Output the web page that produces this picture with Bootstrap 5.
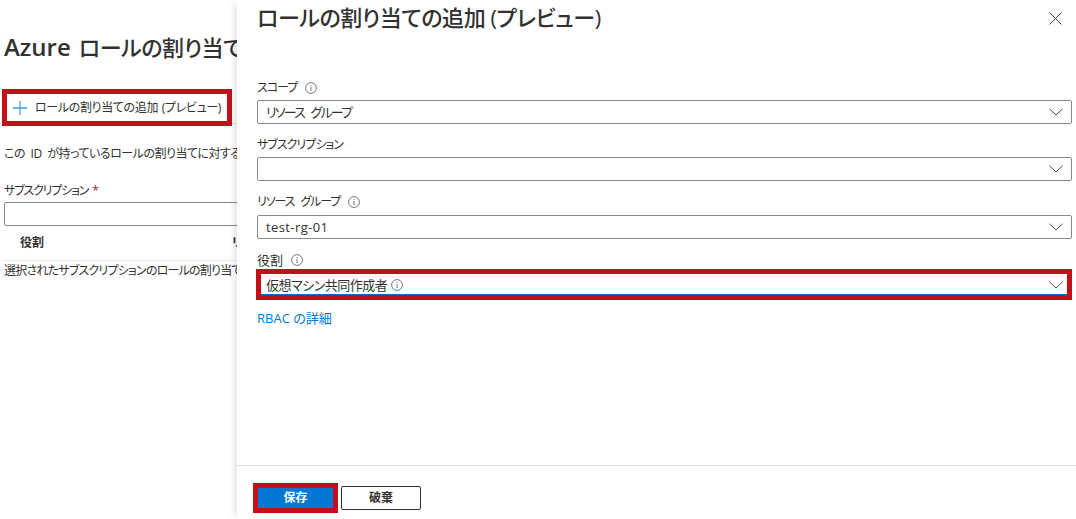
<!DOCTYPE html>
<html lang="ja"><head><meta charset="utf-8">
<link href="https://cdn.jsdelivr.net/npm/bootstrap@5.3.0/dist/css/bootstrap.min.css" rel="stylesheet">
<style>
html,body{height:519px;overflow:hidden;background:#fff}
body{font-family:"Open Sans","Noto Sans CJK JP",sans-serif;font-size:12px;color:#323130;font-feature-settings:"palt";line-height:16px}
.blade{width:237px;height:519px;overflow:hidden;flex:none}
.blade-in{width:400px;padding-left:4px}
.bl-title{font-size:22px;font-weight:500;line-height:32px;margin:31px 0 0;white-space:nowrap;letter-spacing:-.4px}
.az{font-size:24px;font-weight:600;margin-right:8px;letter-spacing:0}
.cmd-wrap{height:37px;width:230px;margin:26px 0 0 -2px;border:5px solid #c30f1c;padding-left:6px;gap:8px;color:#323130;white-space:nowrap;letter-spacing:-.35px;word-spacing:1px}
.cmd-rule{border-top:1px solid #e1dfdd;margin:-3px 0 0 228px;width:20px;height:1px}
.desc{margin:22px 0 0;white-space:nowrap;letter-spacing:-.5px;word-spacing:3px}
.lab-a{margin:21px 0 -1px;letter-spacing:-1.2px}
.req{color:#a4262c;margin-left:4px}
.inp-a{height:24px;border:1px solid #8a8886;border-radius:2px;margin-top:4px}
.thead-a{height:35px;border-bottom:1px solid #edebe9;font-weight:700;width:400px;padding-left:16px;padding-top:9px}
.thead-a span+span{margin-left:188px}
.empty{margin-top:2px;white-space:nowrap;letter-spacing:-.8px}
.pane{flex:1 1 auto;height:519px;min-width:0;box-shadow:-6px 0 8px -4px rgba(0,0,0,.13);background:#fff}
.pane-head{height:40px;padding:0 14px 0 20px}
.pane-title{font-size:22px;font-weight:500;line-height:34px;margin:0;white-space:nowrap;letter-spacing:-.4px}
.pane-body{padding:39px 4px 0 20px}
.fld-lab{height:16px;line-height:16px;gap:8px;margin:1px 0 4px;white-space:nowrap}
.fld-third .fld-lab{margin-bottom:5px}
.tight{letter-spacing:-1px}
.tight-sp{letter-spacing:-1.1px;word-spacing:4px}
.wide13{font-size:13px}
.fld{margin-bottom:13px}
.sel-a{height:24px;border:1px solid #8a8886;border-radius:2px;padding:0 9px 0 8px;font-size:13px;gap:4px}
.sel-a .chev{margin-left:auto;margin-right:-1px}
.sel-tight{letter-spacing:-1.8px;word-spacing:5px}
.sel-latin{letter-spacing:.4px}
.sel-hot{outline:5px solid #c30f1c;outline-offset:-4px;border:0;border-radius:0;height:29px;margin:-2px 1px 0 0;padding:0 8px 0 9px;box-shadow:inset 0 -5px 0 #0f6cbd;letter-spacing:-.5px}
.sel-hot .chev{margin-right:0}
.fld-hot{margin-bottom:11px}
.rbac{display:block;color:#0078d4;text-decoration:none;font-size:13px}
.pane-foot{margin-top:auto;height:54px;border-top:1px solid #e1dfdd;padding:20px 0 0 21px;gap:8px}
.btn-save{width:75px;height:20px;margin-top:2px;background:#0078d4;color:#fff;font-weight:700;border:0;border-radius:0;outline:5px solid #c30f1c;padding:0;font-size:12px;line-height:20px}
.btn-save:hover{background:#0078d4;color:#fff}
.btn-drop{width:80px;height:24px;border:1px solid #323130;border-radius:2px;padding:0;background:#fff;color:#323130;font-weight:700;font-size:12px;line-height:20px}
.x-btn{padding:0;border:0;background:none;line-height:0;margin-top:12px;height:13px}
svg{flex:none;display:block}
</style></head>
<body class="d-flex m-0">
<section class="blade">
  <div class="blade-in">
    <h1 class="bl-title"><span class="az">Azure</span>ロールの割り当ての追加</h1>
    <div class="cmd-wrap d-flex align-items-center">
      <svg width="14" height="14" viewBox="0 0 14 14"><path d="M7 0v14M0 7h14" stroke="#4a9ee0" stroke-width="1.3" fill="none"/></svg>
      <span>ロールの割り当ての追加 (プレビュー)</span>
    </div>
    <div class="cmd-rule"></div>
    <div class="desc">この ID が持っているロールの割り当てに対するアクセス許可</div>
    <div class="lab-a">サブスクリプション<span class="req">*</span></div>
    <div class="inp-a"></div>
    <div class="thead-a d-flex"><span>役割</span><span>リソース</span></div>
    <div class="empty">選択されたサブスクリプションのロールの割り当てはありません</div>
  </div>
</section>
<main class="pane d-flex flex-column">
  <header class="pane-head d-flex justify-content-between align-items-start">
    <h2 class="pane-title">ロールの割り当ての追加 (プレビュー)</h2>
    <button class="x-btn" aria-label="閉じる"><svg width="13" height="13" viewBox="0 0 13 13"><path d="M.5.5l12 12M12.5.5l-12 12" stroke="#484644" fill="none"/></svg></button>
  </header>
  <div class="pane-body">
    <div class="fld">
      <div class="fld-lab d-flex align-items-center"><span class="tight">スコープ</span><svg width="12" height="12" viewBox="0 0 12 12"><circle cx="6" cy="6" r="5.4" fill="none" stroke="#797775"/><path d="M6 5v4M6 3v1" stroke="#797775" fill="none"/></svg></div>
      <div class="sel-a d-flex align-items-center"><span class="sel-tight">リソース グループ</span><svg class="chev" width="14" height="8" viewBox="0 0 14 8"><path d="M.5.8L7 7l6.500-6.200" stroke="#484644" fill="none"/></svg></div>
    </div>
    <div class="fld">
      <div class="fld-lab d-flex align-items-center"><span class="tight">サブスクリプション</span></div>
      <div class="sel-a d-flex align-items-center"><svg class="chev" width="14" height="8" viewBox="0 0 14 8"><path d="M.5.8L7 7l6.500-6.200" stroke="#484644" fill="none"/></svg></div>
    </div>
    <div class="fld fld-third">
      <div class="fld-lab d-flex align-items-center"><span class="tight-sp">リソース グループ</span><svg width="12" height="12" viewBox="0 0 12 12"><circle cx="6" cy="6" r="5.4" fill="none" stroke="#797775"/><path d="M6 5v4M6 3v1" stroke="#797775" fill="none"/></svg></div>
      <div class="sel-a d-flex align-items-center"><span class="sel-latin">test-rg-01</span><svg class="chev" width="14" height="8" viewBox="0 0 14 8"><path d="M.5.8L7 7l6.500-6.200" stroke="#484644" fill="none"/></svg></div>
    </div>
    <div class="fld fld-hot">
      <div class="fld-lab d-flex align-items-center"><span class="wide13">役割</span><svg width="12" height="12" viewBox="0 0 12 12"><circle cx="6" cy="6" r="5.4" fill="none" stroke="#797775"/><path d="M6 5v4M6 3v1" stroke="#797775" fill="none"/></svg></div>
      <div class="sel-a sel-hot d-flex align-items-center"><span>仮想マシン共同作成者</span><svg width="12" height="12" viewBox="0 0 12 12"><circle cx="6" cy="6" r="5.4" fill="none" stroke="#797775"/><path d="M6 5v4M6 3v1" stroke="#797775" fill="none"/></svg><svg class="chev" width="14" height="8" viewBox="0 0 14 8"><path d="M.5.8L7 7l6.500-6.200" stroke="#484644" fill="none"/></svg></div>
    </div>
    <a class="rbac" href="#">RBAC の詳細</a>
  </div>
  <footer class="pane-foot d-flex align-items-start">
    <button class="btn btn-save">保存</button>
    <button class="btn btn-drop">破棄</button>
  </footer>
</main>
</body></html>
